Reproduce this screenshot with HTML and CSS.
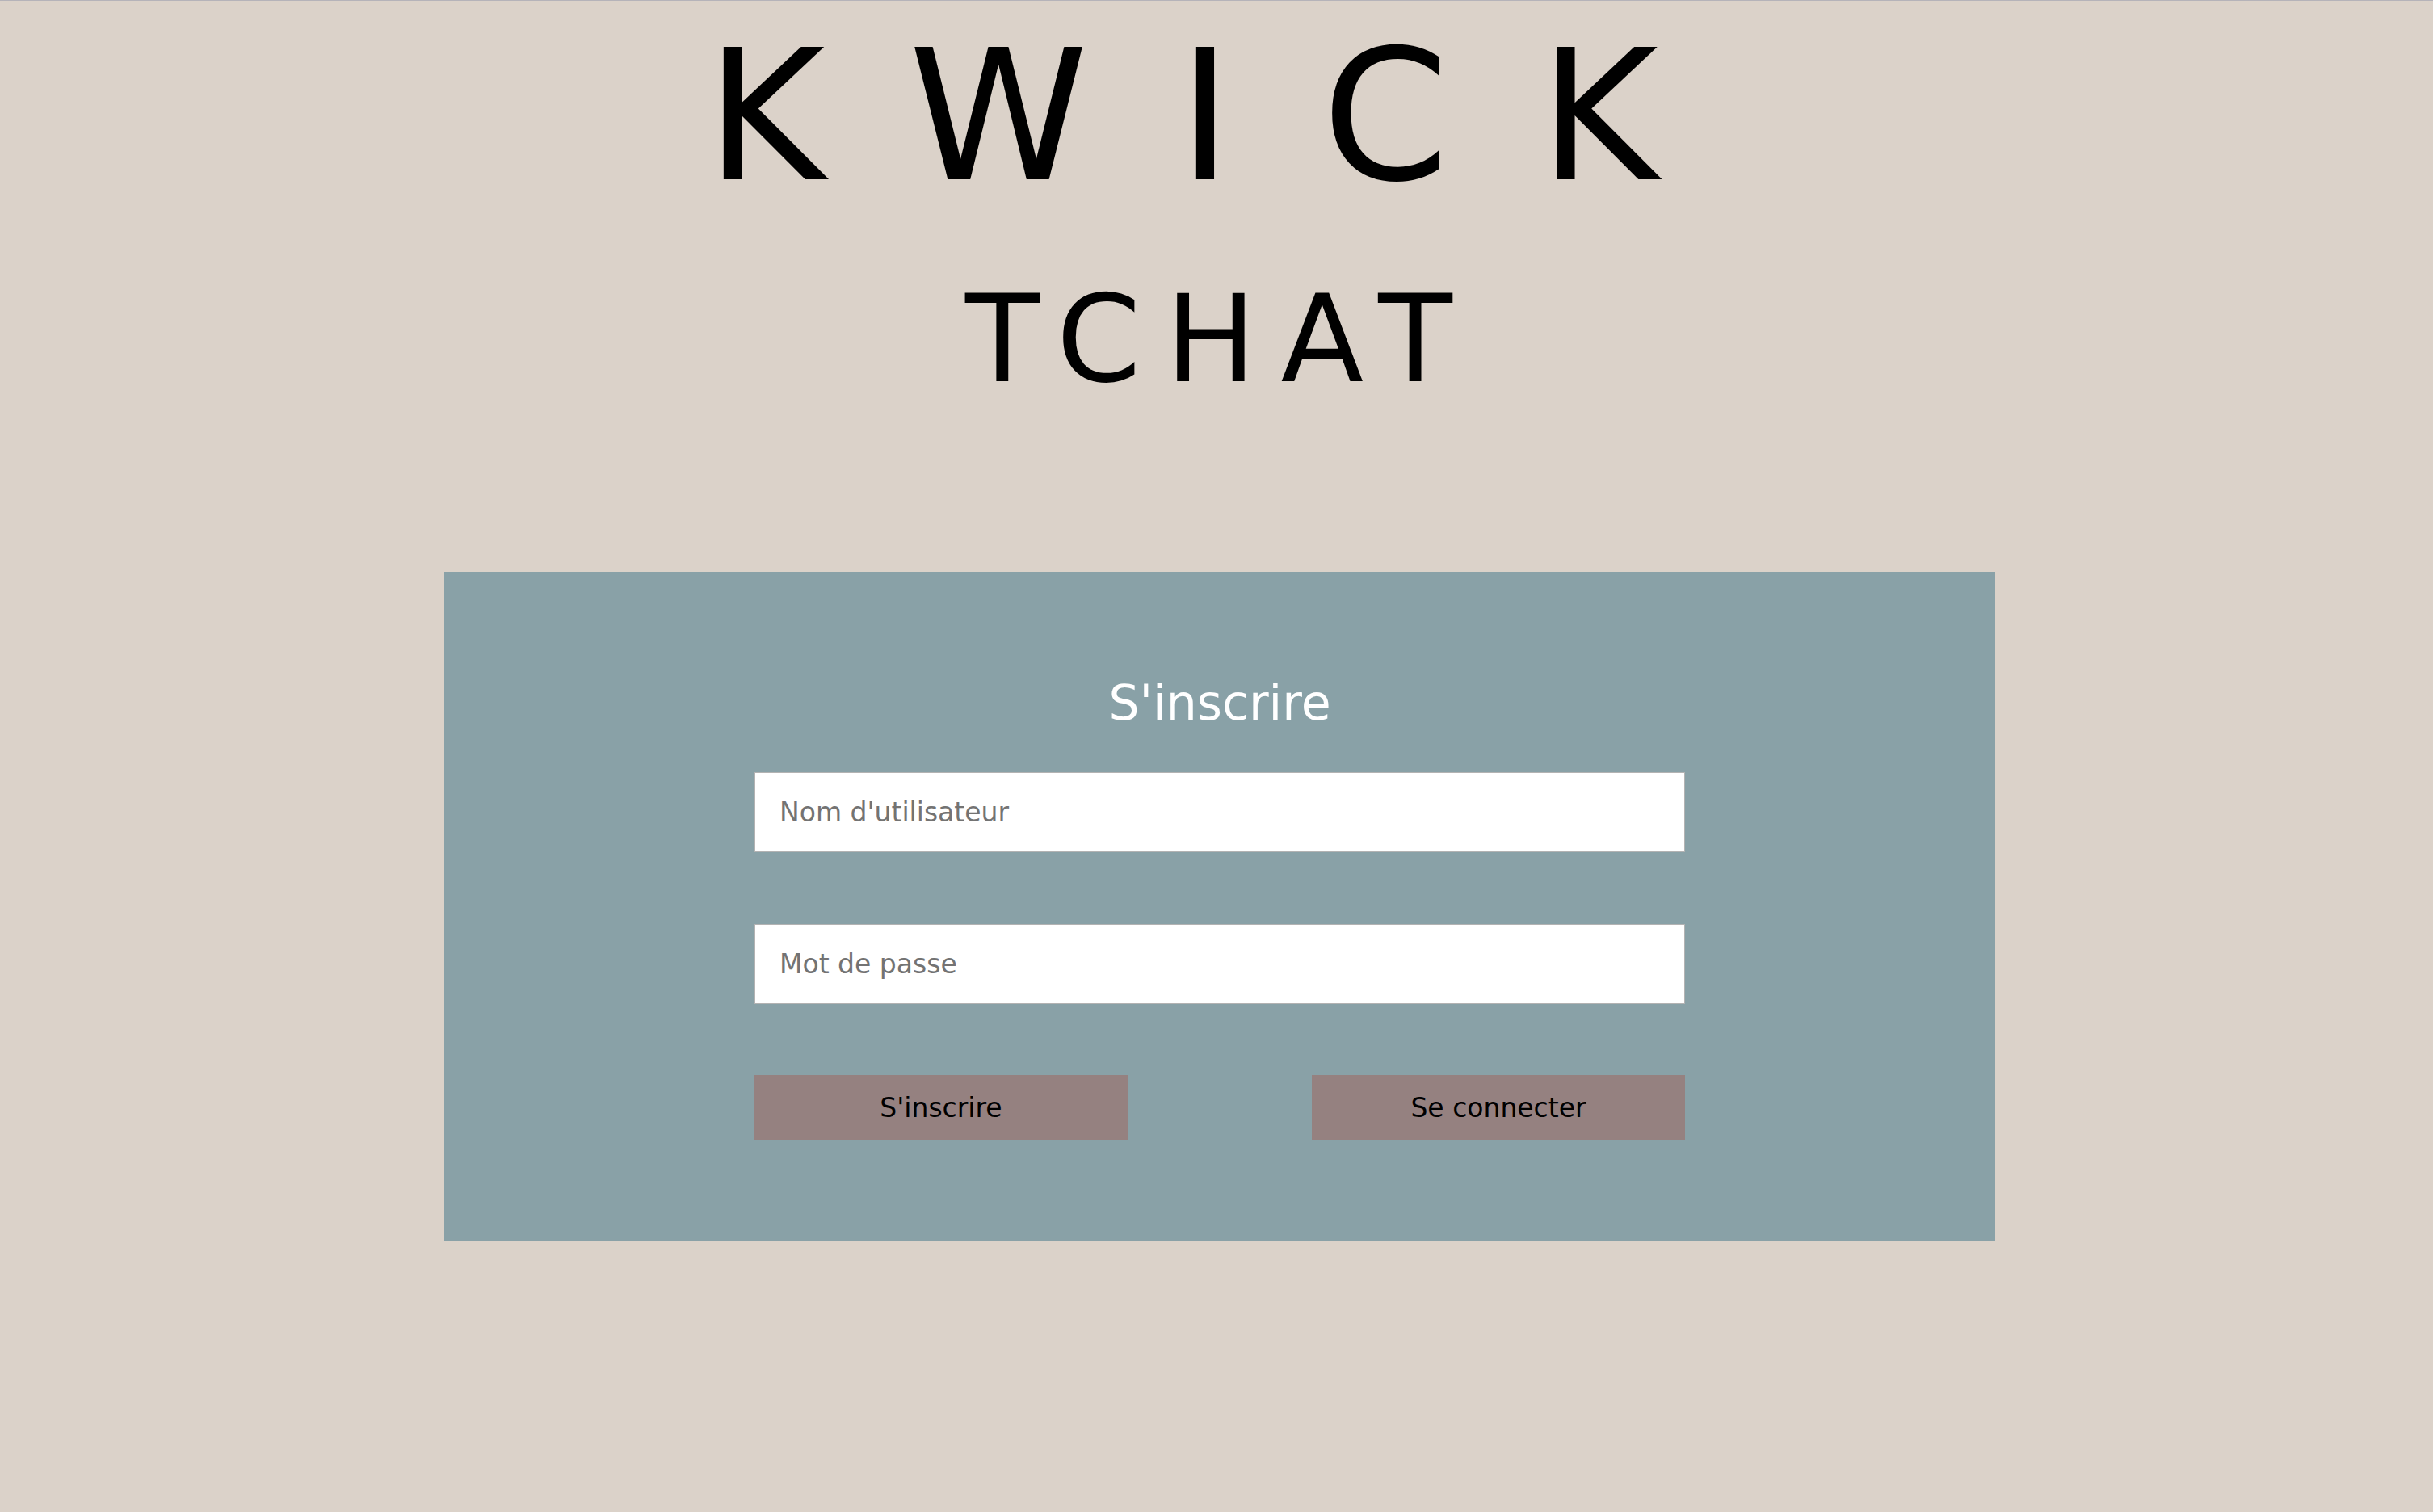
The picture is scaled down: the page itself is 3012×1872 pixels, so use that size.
FILE: index.html
```html
<!DOCTYPE html>
<html lang="fr">
<head>
<meta charset="utf-8">
<title>Kwick Tchat</title>
<link rel="stylesheet" href="styles.css">
</head>
<body>
<header class="brand">
  <h1 class="brand-name">KWICK</h1>
  <h2 class="brand-sub">TCHAT</h2>
</header>
<main class="panel">
  <form class="signup">
    <h3 class="signup-title">S'inscrire</h3>
    <input class="field" type="text" placeholder="Nom d'utilisateur">
    <input class="field field-last" type="password" placeholder="Mot de passe">
    <div class="actions">
      <button class="btn" type="button">S'inscrire</button>
      <button class="btn" type="button">Se connecter</button>
    </div>
  </form>
</main>
</body>
</html>
```
FILE: styles.css
```css
html, body {
  margin: 0;
  padding: 0;
}
body {
  background: #dbd2c9;
  border-top: 1px solid #b5b3b9;
  font-family: "DejaVu Sans", "Liberation Sans", sans-serif;
  color: #000;
  min-height: 1871px;
}
.brand {
  text-align: center;
}
.brand-name {
  margin: 31px 0 0;
  font-size: 225px;
  line-height: 225px;
  font-weight: 400;
  letter-spacing: 111.5px;
  padding-left: 26px;
}
.brand-sub {
  margin: 88px 0 0;
  font-size: 150px;
  line-height: 150px;
  font-weight: 400;
  letter-spacing: 30px;
  padding-left: 11px;
}
.panel {
  width: 1920px;
  margin: 213px 0 0 calc(50% - 956px);
  padding: 132px 0 125px;
  background: #89a1a7;
}
.signup {
  width: 1152px;
  margin: 0 auto;
}
.signup-title {
  margin: 0 0 56px;
  font-size: 60px;
  line-height: 60px;
  font-weight: 400;
  color: #fff;
  text-align: center;
}
.field {
  display: block;
  box-sizing: border-box;
  width: 1152px;
  height: 99px;
  margin: 0 0 89px;
  padding: 0 30px;
  border: 1px solid #b3b3b3;
  background: #fff;
  font-family: "DejaVu Sans", "Liberation Sans", sans-serif;
  font-size: 33px;
  color: #333;
  outline: none;
}
.field::placeholder {
  color: #737373;
}
.field-last {
  margin-bottom: 88px;
}
.actions {
  display: flex;
  justify-content: space-between;
}
.btn {
  width: 462px;
  height: 80px;
  border: 0;
  padding: 0;
  background: #958180;
  font-family: "DejaVu Sans", "Liberation Sans", sans-serif;
  font-size: 33px;
  color: #000;
}
```
